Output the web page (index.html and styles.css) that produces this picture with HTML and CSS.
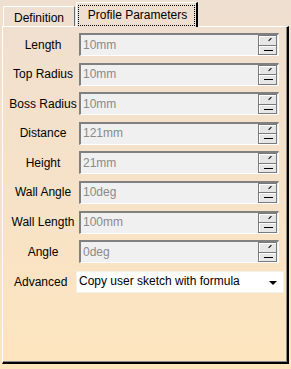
FILE: index.html
```html
<!DOCTYPE html>
<html lang="en">
<head>
  <meta charset="UTF-8" />
  <title>Profile Parameters</title>
  <link rel="stylesheet" href="styles.css">
</head>
<body>
  <div class="dialog">
    <div class="tabs">
      <div class="tab">Definition</div>
      <div class="tab active"><span class="focus">Profile Parameters</span></div>
    </div>
    <div class="panel">
      <div class="row">
        <label>Length</label>
        <div class="field"><span>10mm</span><div class="spin"><i class="up"></i><i class="down"></i></div></div>
      </div>
      <div class="row">
        <label>Top Radius</label>
        <div class="field"><span>10mm</span><div class="spin"><i class="up"></i><i class="down"></i></div></div>
      </div>
      <div class="row">
        <label>Boss Radius</label>
        <div class="field"><span>10mm</span><div class="spin"><i class="up"></i><i class="down"></i></div></div>
      </div>
      <div class="row">
        <label>Distance</label>
        <div class="field"><span>121mm</span><div class="spin"><i class="up"></i><i class="down"></i></div></div>
      </div>
      <div class="row">
        <label>Height</label>
        <div class="field"><span>21mm</span><div class="spin"><i class="up"></i><i class="down"></i></div></div>
      </div>
      <div class="row">
        <label>Wall Angle</label>
        <div class="field"><span>10deg</span><div class="spin"><i class="up"></i><i class="down"></i></div></div>
      </div>
      <div class="row">
        <label>Wall Length</label>
        <div class="field"><span>100mm</span><div class="spin"><i class="up"></i><i class="down"></i></div></div>
      </div>
      <div class="row">
        <label>Angle</label>
        <div class="field"><span>0deg</span><div class="spin"><i class="up"></i><i class="down"></i></div></div>
      </div>
      <div class="row advanced">
        <label>Advanced</label>
        <div class="select"><span>Copy user sketch with formula</span><b class="arrow"></b></div>
      </div>
    </div>
  </div>
</body>
</html>
```

FILE: styles.css
```css
html, body {
  margin: 0;
  width: 291px;
  height: 369px;
  overflow: hidden;
}

body {
  font-family: "Liberation Sans", Arial, sans-serif;
  font-size: 12px;
  color: #000;
  background: linear-gradient(180deg, #efdfd0 0%, #f6e2c8 50%, #fde5be 100%);
}

.dialog {
  padding: 2px 2px 0 2px;
}

.tabs {
  display: flex;
  align-items: flex-end;
  height: 24px;
  padding-left: 1px;
}

.tab {
  height: 20px;
  width: 72px;
  box-sizing: border-box;
  border-top: 1px solid #fff;
  border-left: 1px solid #fff;
  border-right: 1px solid #6e6e6e;
  display: flex;
  align-items: center;
  justify-content: center;
  padding-top: 2px;
}

.tab.active {
  height: 25px;
  width: 122px;
  margin-left: 1px;
  margin-bottom: -1px;
  border-right: 2px solid #000;
  position: relative;
  z-index: 1;
  background: #efdfd0;
  padding-top: 0;
}

.focus {
  border: 1px dotted #000;
  padding: 2px 7px 3px 9px;
  margin-top: 1px;
}

.panel {
  height: 338px;
  box-sizing: border-box;
  border-top: 1px solid #fff;
  border-left: 1px solid #fff;
  border-right: 2px solid #000;
  border-bottom: 2px solid #000;
  box-shadow: inset -1px -1px 0 #8a8a8a;
  padding: 6px 0 0 5px;
  display: flex;
  flex-direction: column;
  gap: 6.6px;
}

.row {
  display: flex;
  align-items: center;
  height: 23px;
}

.row label {
  width: 70px;
  text-align: center;
  margin-right: 1px;
}

.field {
  width: 200px;
  height: 23px;
  box-sizing: border-box;
  border-top: 2px solid #808080;
  border-left: 2px solid #808080;
  border-bottom: 1px solid #fff;
  border-right: 1px solid #fff;
  background: #f0f0f0;
  display: flex;
  align-items: center;
  justify-content: space-between;
  color: #8a8a8a;
}

.field span {
  padding-left: 2px;
  margin-top: -1px;
}

.spin {
  width: 19px;
  height: 20px;
  box-sizing: border-box;
  background: #7a7a7a;
  padding: 1px;
  display: flex;
  flex-direction: column;
  gap: 1px;
  margin-right: 1px;
}

.spin i {
  flex: 1;
  background: #e6e6e6;
  border-top: 1px solid #fff;
  border-left: 1px solid #fff;
  position: relative;
}

.spin .up::after {
  content: "";
  position: absolute;
  left: 8px;
  top: 2px;
  width: 4px;
  height: 1px;
  background: #000;
  transform: rotate(-45deg);
}

.spin .down::after {
  content: "";
  position: absolute;
  left: 4px;
  top: 3px;
  width: 9px;
  height: 1px;
  background: #000;
}

.advanced {
  margin-top: 1px;
}

.advanced label {
  width: 62px;
  margin-left: 1px;
  margin-right: 0;
  padding-left: 5px;
  text-align: left;
}

.select {
  width: 208px;
  height: 22px;
  box-sizing: border-box;
  background: #fff;
  border: 1px solid #f4f1ec;
  display: flex;
  align-items: center;
  justify-content: space-between;
  padding: 0 6px 0 2px;
}

.select span {
  margin-top: -2px;
}

.arrow {
  width: 0;
  height: 0;
  border-left: 4px solid transparent;
  border-right: 4px solid transparent;
  border-top: 4px solid #000;
  margin-top: 2px;
}
```
